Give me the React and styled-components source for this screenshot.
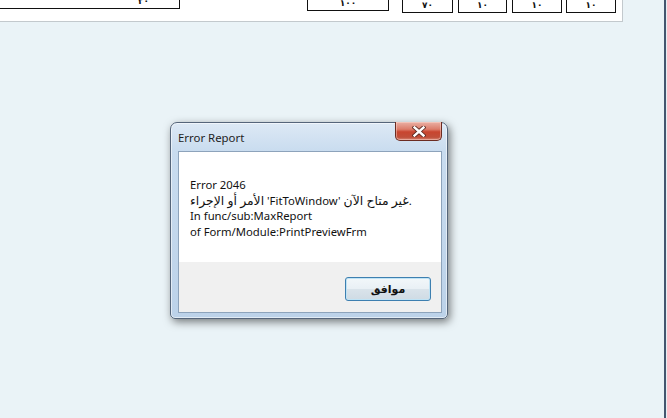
import React from 'react';
import styled, { createGlobalStyle } from 'styled-components';

const Global = createGlobalStyle`
  html, body { margin: 0; padding: 0; }
  body { width: 667px; height: 418px; overflow: hidden; background: #eaf3f7; }
`;

const Screen = styled.div`
  position: relative;
  width: 667px;
  height: 418px;
  display: flex;
  background: #eaf3f7;
  overflow: hidden;
`;

const Workspace = styled.div`
  flex: 0 0 664px;
  display: flex;
  flex-direction: column;
`;

const EdgeLine = styled.div`
  flex: 0 0 2px;
  background: #44566f;
`;

const EdgeRest = styled.div`
  flex: 1;
  background: #e6eef3;
`;

const ReportStrip = styled.div`
  box-sizing: border-box;
  width: 623px;
  height: 22px;
  background: #ffffff;
  border-right: 1px solid #c3c9cd;
  border-bottom: 1px solid #c3c9cd;
  display: flex;
  align-items: flex-start;
  overflow: hidden;
`;

const Cell = styled.div`
  box-sizing: border-box;
  flex: 0 0 ${(p) => p.$w}px;
  height: 22px;
  margin-top: ${(p) => p.$bottom - 21}px;
  margin-left: ${(p) => p.$gap}px;
  border: 1px solid #111;
  display: flex;
  align-items: flex-end;
  justify-content: ${(p) => (p.$align === 'right' ? 'flex-end' : 'center')};
  padding: 0 ${(p) => (p.$align === 'right' ? 30 : 0)}px 2px;
  font-family: "DejaVu Sans", sans-serif;
  font-weight: bold;
  font-size: 9px;
  line-height: 9px;
  color: #111;
`;

const Window = styled.div`
  position: absolute;
  left: 170px;
  top: 122px;
  width: 278px;
  height: 197px;
  box-sizing: border-box;
  border: 1px solid #55657a;
  border-radius: 7px 7px 5px 5px;
  background: linear-gradient(180deg, #dde9f5 0px, #c9dcef 28px, #bcd2e9 100%);
  box-shadow: inset 0 0 0 1px rgba(255, 255, 255, 0.55), 2px 3px 9px rgba(0, 0, 0, 0.5);
  display: flex;
  flex-direction: column;
  padding: 0 5px 5px 7px;
  font-family: "Noto Sans", "DejaVu Sans", sans-serif;
`;

const TitleBar = styled.div`
  height: 28px;
  display: flex;
  align-items: flex-start;
  justify-content: space-between;
`;

const TitleText = styled.div`
  margin-top: 7px;
  font-size: 11.4px;
  line-height: 16px;
  color: #1e1e1e;
`;

const CloseButton = styled.div`
  box-sizing: border-box;
  width: 47px;
  height: 19px;
  margin-top: -1px;
  border: 1px solid #6b2c22;
  border-top: none;
  border-radius: 0 0 5px 5px;
  background: linear-gradient(180deg, #eab1a5 0%, #dc7d6b 40%, #c8452f 55%, #c04f3a 85%, #d98a78 100%);
  box-shadow: inset 0 0 0 1px rgba(255, 220, 210, 0.45);
  display: flex;
  align-items: center;
  justify-content: center;
`;

const Client = styled.div`
  flex: 1;
  display: flex;
  flex-direction: column;
  border: 1px solid #8da3bb;
  background: #ffffff;
`;

const MessageArea = styled.div`
  flex: 1;
  padding: 25px 11px 0;
  background: #ffffff;
`;

const MessageLine = styled.div`
  font-size: 11.3px;
  line-height: 15.7px;
  height: 15.7px;
  color: #111;
  white-space: nowrap;
  direction: ltr;
`;

const ArabicRun = styled.span`
  font-size: 12.4px;
`;

const Footer = styled.div`
  flex: 0 0 50px;
  background: #f0f0f0;
  display: flex;
  justify-content: flex-end;
  align-items: flex-start;
  padding: 15px 10px 0 0;
  box-sizing: border-box;
`;

const DialogButton = styled.div`
  box-sizing: border-box;
  width: 86px;
  height: 24px;
  border: 1px solid #3d7fb0;
  border-radius: 3px;
  background: linear-gradient(180deg, #f2f7fa 0%, #e9f0f5 48%, #d9e3ea 52%, #cfdbe4 100%);
  box-shadow: inset 0 0 0 1px #bfe3f5;
  display: flex;
  align-items: center;
  justify-content: center;
  font-family: "DejaVu Sans", sans-serif;
  font-weight: bold;
  font-size: 11px;
  color: #111;
`;

function CloseGlyph() {
  return (
    <svg width="14" height="11" viewBox="0 0 14 11">
      <path d="M2.5 1.5 L11.5 9.5 M11.5 1.5 L2.5 9.5" stroke="#5a2a22" strokeWidth="4.2" strokeLinecap="square" />
      <path d="M2.5 1.5 L11.5 9.5 M11.5 1.5 L2.5 9.5" stroke="#ffffff" strokeWidth="2.4" strokeLinecap="square" />
    </svg>
  );
}

const cells = [
  { w: 182, bottom: 8, gap: -2, text: '٢٠', align: 'right' },
  { w: 82, bottom: 10, gap: 127, text: '١٠٠' },
  { w: 51, bottom: 12, gap: 13, text: '٧٠' },
  { w: 49, bottom: 12, gap: 5, text: '١٠' },
  { w: 50, bottom: 12, gap: 5, text: '١٠' },
  { w: 50, bottom: 12, gap: 4, text: '١٠' },
];

export default function App() {
  return (
    <>
      <Global />
      <Screen>
        <Workspace>
          <ReportStrip>
            {cells.map((c, i) => (
              <Cell key={i} $w={c.w} $bottom={c.bottom} $gap={c.gap} $align={c.align}>
                {c.text}
              </Cell>
            ))}
          </ReportStrip>
        </Workspace>
        <EdgeLine />
        <EdgeRest />
        <Window>
          <TitleBar>
            <TitleText>Error Report</TitleText>
            <CloseButton>
              <CloseGlyph />
            </CloseButton>
          </TitleBar>
          <Client>
            <MessageArea>
              <MessageLine>Error 2046</MessageLine>
              <MessageLine dir="ltr">
                <ArabicRun>الأمر أو الإجراء</ArabicRun> 'FitToWindow' <ArabicRun>غير متاح الآن</ArabicRun>.
              </MessageLine>
              <MessageLine>In func/sub:MaxReport</MessageLine>
              <MessageLine>of Form/Module:PrintPreviewFrm</MessageLine>
            </MessageArea>
            <Footer>
              <DialogButton>موافق</DialogButton>
            </Footer>
          </Client>
        </Window>
      </Screen>
    </>
  );
}
